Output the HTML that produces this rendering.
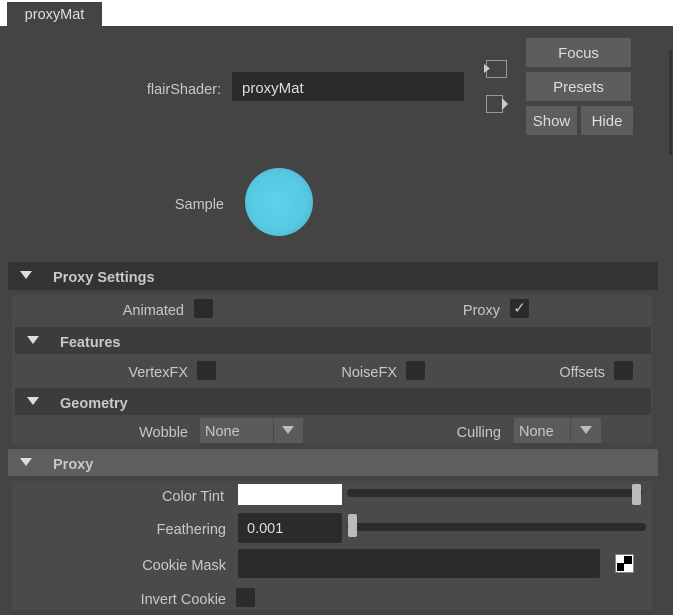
<!DOCTYPE html><html><head><style>
body{margin:0;width:673px;height:615px;background:#444;position:relative;overflow:hidden;font-family:"Liberation Sans",sans-serif;color:#c8c8c8;font-size:14.5px}
div{position:absolute;box-sizing:border-box}
.l{text-align:right;white-space:nowrap;line-height:20px;margin-top:2px}
.btn{background:#5d5d5d;color:#ddd;text-align:center;line-height:31px;font-size:15px}
.cb{background:#2b2b2b;width:19px;height:19px;border-radius:2px}
.hd{font-weight:bold;color:#c8c8c8;font-size:14.5px;margin-top:2px}
.tri{width:0;height:0;border-left:6px solid transparent;border-right:6px solid transparent;border-top:8px solid #ddd}
.dd{background:#5b5b5b;height:25px;line-height:29px;padding-left:5px;color:#c8c8c8}
</style></head><body>
<div style="left:0;top:0;width:673px;height:26px;background:#fff"></div>
<div style="left:7px;top:2px;width:95px;height:24px;background:#444;color:#ddd;text-align:center;line-height:26px;font-size:14.5px">proxyMat</div>
<div style="left:669px;top:50px;width:3px;height:105px;background:#333"></div>
<div class="l" style="left:100px;top:78px;width:121px">flairShader:</div>
<div style="left:232px;top:72px;width:232px;height:29px;background:#2b2b2b;border-radius:2px;color:#ddd;line-height:33px;padding-left:10px;font-size:15px">proxyMat</div>
<svg style="position:absolute;left:482px;top:58px" width="28" height="56"><rect x="4.5" y="2.5" width="20" height="17" fill="none" stroke="#999"/><path d="M2 6 L8 10.5 L2 15Z" fill="#ccc"/><rect x="4.5" y="37.5" width="16" height="17" fill="none" stroke="#999"/><path d="M20 40 L26 46 L20 52Z" fill="#ccc"/></svg>
<div class="btn" style="left:526px;top:38px;width:105px;height:29px">Focus</div>
<div class="btn" style="left:526px;top:72px;width:105px;height:29px">Presets</div>
<div class="btn" style="left:526px;top:106px;width:51px;height:29px">Show</div>
<div class="btn" style="left:581px;top:106px;width:52px;height:29px">Hide</div>
<div class="l" style="left:120px;top:193px;width:104px">Sample</div>
<div style="left:245px;top:168px;width:68px;height:68px;border-radius:50%;background:radial-gradient(circle at 48% 50%,#5ed3ec 0%,#57c8e2 60%,#3fa4bd 100%)"></div>

<div style="left:8px;top:262px;width:650px;height:28px;background:#333"></div>
<div class="tri" style="left:20px;top:271px"></div>
<div class="hd" style="left:53px;top:268px">Proxy Settings</div>
<div style="left:12px;top:295px;width:640px;height:148px;background:#4a4a4a"></div>
<div class="l" style="left:80px;top:299px;width:104px">Animated</div>
<div class="cb" style="left:194px;top:299px"></div>
<div class="l" style="left:400px;top:299px;width:100px">Proxy</div>
<div class="cb" style="left:510px;top:299px;color:#ccc;font-size:15px;line-height:19px;text-align:center">✓</div>
<div style="left:15px;top:327px;width:636px;height:27px;background:#3c3c3c"></div>
<div class="tri" style="left:27px;top:336px"></div>
<div class="hd" style="left:60px;top:333px">Features</div>
<div class="l" style="left:90px;top:361px;width:98px">VertexFX</div>
<div class="cb" style="left:197px;top:361px"></div>
<div class="l" style="left:300px;top:361px;width:97px">NoiseFX</div>
<div class="cb" style="left:406px;top:361px"></div>
<div class="l" style="left:500px;top:361px;width:105px">Offsets</div>
<div class="cb" style="left:614px;top:361px"></div>
<div style="left:15px;top:388px;width:636px;height:27px;background:#3c3c3c"></div>
<div class="tri" style="left:27px;top:397px"></div>
<div class="hd" style="left:60px;top:394px">Geometry</div>
<div class="l" style="left:90px;top:421px;width:98px">Wobble</div>
<div class="dd" style="left:200px;top:418px;width:73px">None</div>
<div class="dd" style="left:274px;top:418px;width:29px"></div>
<div class="tri" style="left:282px;top:426px;border-top-color:#bbb"></div>
<div class="l" style="left:400px;top:421px;width:101px">Culling</div>
<div class="dd" style="left:514px;top:418px;width:56px">None</div>
<div class="dd" style="left:571px;top:418px;width:30px"></div>
<div class="tri" style="left:580px;top:426px;border-top-color:#bbb"></div>

<div style="left:8px;top:449px;width:650px;height:27px;background:#5e5e5e"></div>
<div class="tri" style="left:20px;top:458px"></div>
<div class="hd" style="left:53px;top:455px">Proxy</div>
<div style="left:12px;top:481px;width:640px;height:129px;background:#4a4a4a"></div>
<div class="l" style="left:100px;top:485px;width:124px">Color Tint</div>
<div style="left:238px;top:484px;width:104px;height:21px;background:#fff"></div>
<div style="left:347px;top:489px;width:295px;height:8px;background:#2b2b2b;border-radius:4px"></div>
<div style="left:632px;top:484px;width:9px;height:21px;background:#bbb;border-radius:2px"></div>
<div class="l" style="left:100px;top:518px;width:126px">Feathering</div>
<div style="left:238px;top:513px;width:104px;height:30px;background:#2b2b2b;border-radius:2px;color:#ddd;line-height:33px;padding-left:9px">0.001</div>
<div style="left:347px;top:523px;width:299px;height:8px;background:#2b2b2b;border-radius:4px"></div>
<div style="left:348px;top:514px;width:9px;height:23px;background:#bbb;border-radius:2px"></div>
<div class="l" style="left:100px;top:554px;width:126px">Cookie Mask</div>
<div style="left:238px;top:549px;width:362px;height:29px;background:#2b2b2b;border-radius:2px"></div>
<svg style="position:absolute;left:615px;top:554px" width="19" height="19"><rect x=".5" y=".5" width="18" height="18" fill="#fff" stroke="#888"/><rect x="9" y="2" width="8" height="8" fill="#000"/><rect x="2" y="9" width="7" height="8" fill="#000"/></svg>
<div class="l" style="left:100px;top:588px;width:126px">Invert Cookie</div>
<div class="cb" style="left:236px;top:588px"></div>
</body></html>
